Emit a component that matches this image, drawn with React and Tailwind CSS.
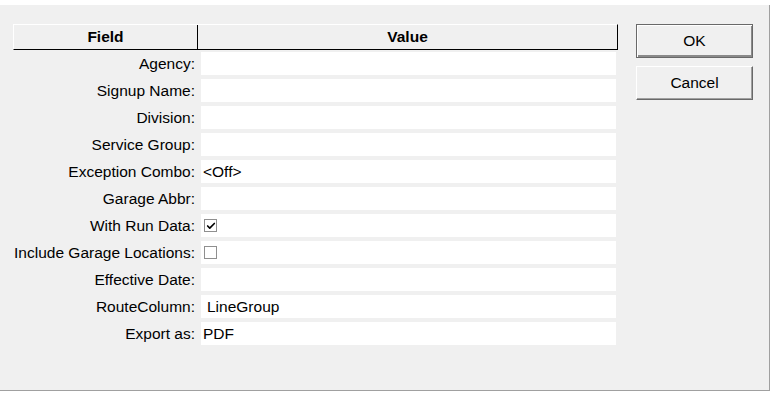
import { Check } from "lucide-react"

const rows = [
  { label: "Agency:" },
  { label: "Signup Name:" },
  { label: "Division:" },
  { label: "Service Group:" },
  { label: "Exception Combo:", value: "<Off>" },
  { label: "Garage Abbr:" },
  { label: "With Run Data:", check: true },
  { label: "Include Garage Locations:", check: false },
  { label: "Effective Date:" },
  { label: "RouteColumn:", value: "LineGroup", indent: true },
  { label: "Export as:", value: "PDF" },
]

function Checkbox({ checked }) {
  return (
    <span className="flex h-[13px] w-[13px] items-center justify-center border border-[#8f8f8f] bg-white">
      {checked && <Check className="h-[10px] w-[10px] text-black" strokeWidth={4} />}
    </span>
  )
}

export default function App() {
  return (
    <div className="h-[402px] w-[774px] bg-white pt-[5px] font-['Liberation_Sans',Arial,sans-serif] text-[15.5px] text-black">
      <div className="flex h-[386px] w-[770px] border-r border-b border-[#a0a0a0] bg-[#f0f0f0] pt-[19px]">
        <div className="ml-[13px] flex w-[605px] flex-col">
          <div className="flex h-[26px] border-t border-l border-t-white border-l-white border-b border-b-black border-r border-r-black font-bold">
            <div className="flex w-[184px] items-center justify-center border-r border-black">Field</div>
            <div className="flex flex-1 items-center justify-center">Value</div>
          </div>
          <div className="mt-[2px] flex flex-col gap-[4px]">
            {rows.map((r) => (
              <div key={r.label} className="flex h-[23px] items-center">
                <div className="w-[183px] pr-[1px] text-right leading-none whitespace-nowrap">{r.label}</div>
                <div className="ml-[5px] flex h-[23px] w-[415px] items-center bg-white leading-none">
                  {r.check !== undefined ? (
                    <span className="ml-[3px]"><Checkbox checked={r.check} /></span>
                  ) : r.value ? (
                    <span className={r.indent ? "ml-[6px]" : "ml-[2px]"}>{r.value}</span>
                  ) : null}
                </div>
              </div>
            ))}
          </div>
        </div>
        <div className="ml-[18px] flex flex-col gap-[8px]">
          <button
            type="button"
            className="h-[34px] w-[117px] border border-[#696969] bg-[#f0f0f0] shadow-[inset_1px_1px_0_#ffffff,inset_-1px_-2px_0_#8a8a8a]"
          >
            OK
          </button>
          <button
            type="button"
            className="h-[34px] w-[117px] border border-t-white border-l-white border-r-[#696969] border-b-[#696969] bg-[#f0f0f0] shadow-[inset_-1px_-1px_0_#a0a0a0]"
          >
            Cancel
          </button>
        </div>
      </div>
    </div>
  )
}
